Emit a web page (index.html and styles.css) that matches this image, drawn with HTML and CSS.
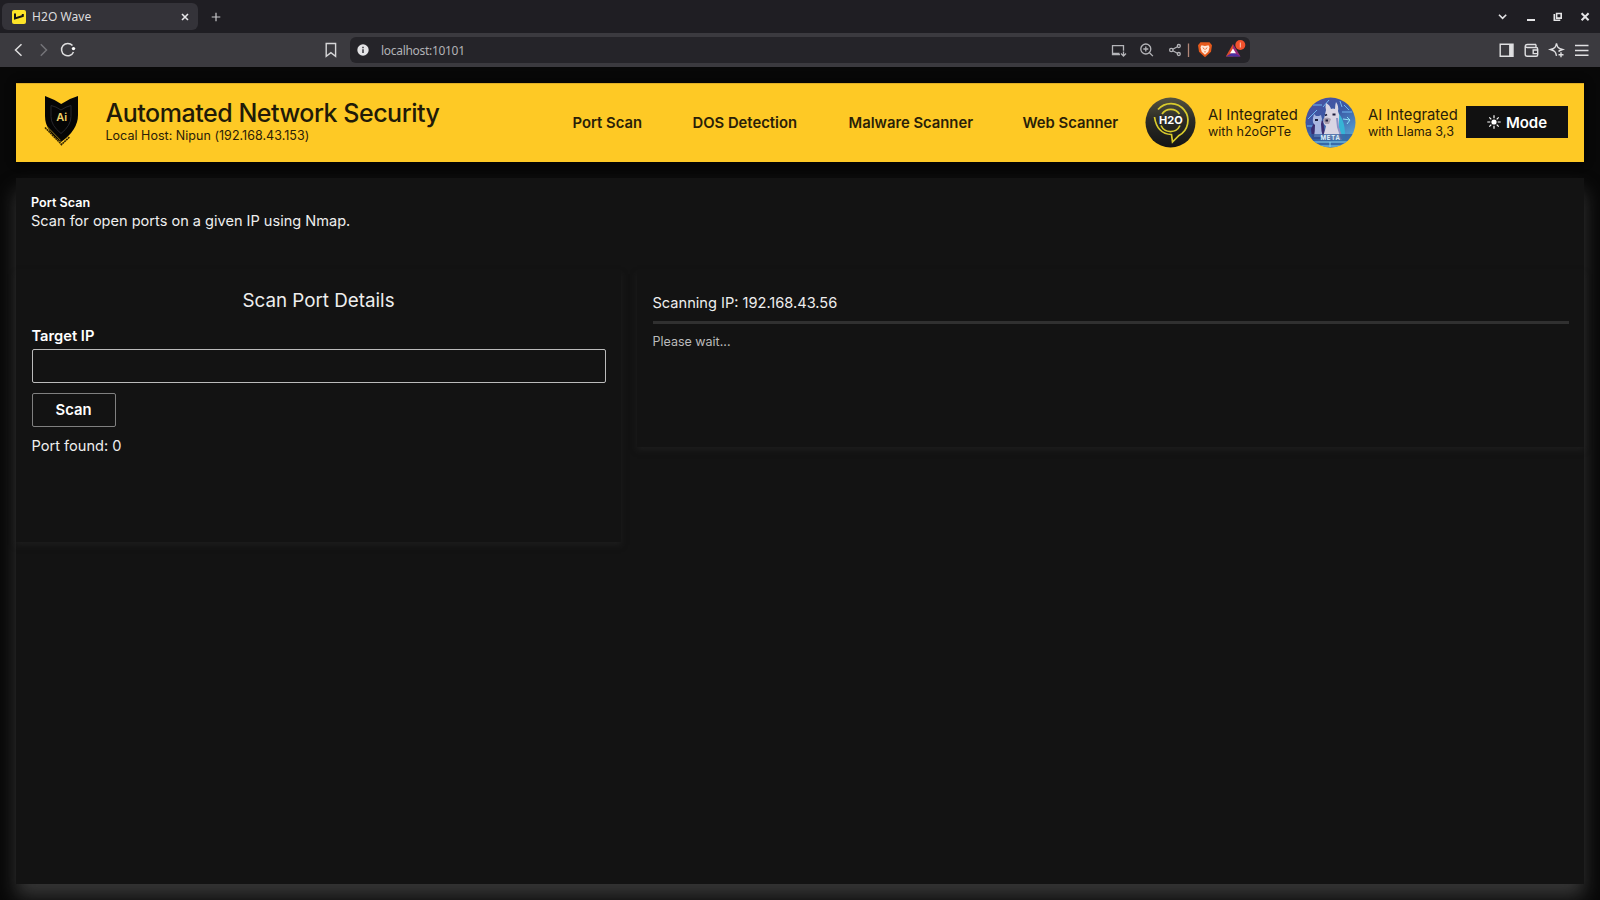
FILE: index.html
```html
<!DOCTYPE html>
<html lang="en">
<head>
<meta charset="utf-8">
<title>H2O Wave</title>
<link rel="stylesheet" href="styles.css">
</head>
<body>
<div class="tabstrip">
  <div class="tab">
    <svg class="favicon" width="14" height="14" viewBox="0 0 14 14"><rect width="14" height="14" rx="2" fill="#fde428"/><path d="M3 3.500V8.500L10.800 6V4" fill="none" stroke="#151515" stroke-width="2"/></svg>
    <span class="tab-title">H2O Wave</span>
    <svg class="tab-close" width="8" height="8" viewBox="0 0 8 8"><path d="M1 1l6 6M7 1l-6 6" stroke="#e6e6e8" stroke-width="1.6"/></svg>
  </div>
  <svg class="new-tab" width="10" height="10" viewBox="0 0 10 10"><path d="M5 .7v8.6M.7 5h8.6" stroke="#c8c8cb" stroke-width="1.2"/></svg>
  <div class="window-controls">
    <svg width="110" height="16" viewBox="1490 9 110 16" fill="none" stroke="#e4e4e6" stroke-width="1.6"><path d="M1499 14.8l3.6 3.6 3.6-3.6"/><path d="M1527 20h8" stroke-width="2"/><path d="M1556.600 13.500h4.600v4.600h-4.600zM1554.300 14v6.300h6"/><path d="M1581.600 13.200l7 7M1588.600 13.200l-7 7" stroke-width="2"/></svg>
  </div>
</div>
<div class="toolbar">
  <svg class="nav-icons" width="80" height="20" viewBox="0 40 80 20" fill="none" stroke="#dededf" stroke-width="1.5"><path d="M21.500 44.200l-6 5.800 6 5.800"/><path d="M40.800 44.200l5.700 5.800-5.700 5.800" stroke="#747478"/><path d="M73.500 52A6.200 6.200 0 1 1 72.500 45.600"/><circle cx="73.500" cy="48.600" r="1.700" fill="#fff" stroke="none"/></svg>
  <svg class="bookmark" width="12" height="16" viewBox="0 0 12 16"><path d="M1.200 1.500h9.400v12.800L5.900 10.600 1.200 14.300z" fill="none" stroke="#d6d6d8" stroke-width="1.400"/></svg>
  <div class="address">
    <svg class="info" width="12" height="12" viewBox="0 0 12 12"><circle cx="6" cy="6" r="5.700" fill="#e4e4e6"/><path d="M6 5.200V9M6 2.800v1.400" stroke="#28272d" stroke-width="1.400"/></svg>
    <span class="url">localhost:10101</span>
    <svg class="address-icons" width="140" height="24" viewBox="1109 38 140 24" fill="none" stroke="#b4b4b8" stroke-width="1.300">
      <path d="M1120 54.700h-7.500v-9h11v5M1112.500 53.500h7M1123.500 51.500v5M1121 53.500l2.500 2.500 2.500-2.500"/>
      <circle cx="1145.800" cy="49" r="5"/><path d="M1149.500 52.700l3.400 3.400M1143.300 49h5M1145.800 46.500v5"/>
      <circle cx="1171.300" cy="50" r="1.700"/><circle cx="1178.800" cy="46" r="1.500"/><circle cx="1178.800" cy="54" r="1.500"/><path d="M1172.800 49.200l4.600-2.500M1172.800 50.800l4.600 2.500"/>
      <path d="M1188.500 43.500v13.500" stroke="#b28778"/>
      <path d="M1200.500 42.300h9l2.500 3-1 6.500-6 5.400-6-5.400-1-6.500z" fill="#e65a1c" stroke="none"/><path d="M1201.500 45.200l3.500.8 3.500-.8 1 2-1.200 4.500-3.300 3-3.300-3-1.200-4.500z" fill="#ffe7d7" stroke="none"/><path d="M1203 47.500l1.400 2M1207 47.500l-1.400 2M1205 51v1.500" stroke="#e65a1c" stroke-width=".9"/>
      <path d="M1233 44l-7.200 12.400h7.200z" fill="#dd4c2c" stroke="none"/><path d="M1233 44l7.500 12.400H1233z" fill="#9a2a78" stroke="none"/><path d="M1225.800 56.400l7.200-4.200 7.500 4.200z" fill="#4b2fa0" stroke="none"/><path d="M1233 48.500l3 4.700h-6z" fill="#fff" stroke="none"/>
      <circle cx="1240.300" cy="45" r="5" fill="#f1512d" stroke="none"/><path d="M1240.300 42.500v5" stroke="#ffc8b4" stroke-width="1"/>
    </svg>
  </div>
  <svg class="right-icons" width="110" height="20" viewBox="1490 40 110 20" fill="none" stroke="#e0e0e2" stroke-width="1.400">
    <path d="M1500.200 44.200h12.800v12h-12.800z"/><path d="M1511 44v12.500" stroke-width="3.800"/>
    <path d="M1536 44.500h-8.500q-2.300 0-2.300 2v7.700q0 2 2 2h9q1.500 0 1.500-1.500v-5.500q0-1.700-1.500-1.700h-9q-1.800 0-2-1.300M1536 44.500v2.800M1538 50h-4.800v3.600h4.800"/>
    <path d="M1556.500 55.800c-.8-4-1.700-5-6-6.300 4.300-1.200 5.200-2.200 6-6.200.8 4 1.700 5 6 6.200-2 .6-3.200 1-4 2M1561 52.300v5M1558.500 54.800h5"/>
    <path d="M1575 45.500h13.500M1575 50.500h13.500M1575 55.300h13.500"/>
  </svg>
</div>
<div class="page">
  <header class="header">
    <svg class="shield" width="36" height="52" viewBox="43 95 36 52"><path d="M45 96q8.500 3 16.200 8Q69 98.500 78 96v19q0 15-17 27Q45 131 45 116z" fill="#050505"/><path d="M51 105.500q5 1 10 4.500 5-3.500 10-4.500v11q0 9-10 17-10-8-10-17z" fill="none" stroke="#26262b"/><path d="M45 127.500l15 15.300 1.500 1.700 8-7.500" fill="none" stroke="#332500" stroke-width="1.600" stroke-dasharray="2 .5"/><path d="M45.500 125l15 15.300" stroke="#fec925" stroke-width=".6"/><text x="61.800" y="121" class="shield-text">Ai</text></svg>
    <div class="brand"><div class="brand-title">Automated Network Security</div><div class="brand-sub">Local Host: Nipun (192.168.43.153)</div></div>
    <nav class="nav"><a class="n1">Port Scan</a><a class="n2">DOS Detection</a><a class="n3">Malware Scanner</a><a class="n4">Web Scanner</a></nav>
    <svg class="avatar" width="51" height="51" viewBox="0 0 51 51">
      <defs><linearGradient id="g1" x1="0" y1="0" x2="0" y2="1"><stop offset="0" stop-color="#55533e"/><stop offset=".45" stop-color="#2b2b26"/><stop offset="1" stop-color="#151514"/></linearGradient></defs>
      <circle cx="25.500" cy="25.500" r="25" fill="url(#g1)"/>
      <g fill="none" stroke="#d8cb2c" stroke-width="1.700"><path d="M13 12.500A17 17 0 1 1 34 38.500L27.500 45 26.500 37.500Q12 37 9.500 20"/><path d="M17 17A10.500 10.500 0 0 1 34.500 17M16 28.500A10.500 10.500 0 0 0 35 28.500"/></g>
      <text x="25.800" y="26.500" class="h2o-text">H2O</text>
    </svg>
    <div class="ai ai-h2o"><div class="ai-title">AI Integrated</div><div class="ai-sub">with h2oGPTe</div></div>
    <svg class="avatar" width="51" height="51" viewBox="0 0 51 51">
      <defs><linearGradient id="g2" x1="0" y1="0" x2=".6" y2="1"><stop offset="0" stop-color="#514d9e"/><stop offset=".5" stop-color="#3a5aa6"/><stop offset="1" stop-color="#58a6d4"/></linearGradient><clipPath id="c2"><circle cx="25.500" cy="25.500" r="25"/></clipPath></defs>
      <g clip-path="url(#c2)"><rect width="51" height="51" fill="url(#g2)"/>
      <path d="M3 22l9-9M8 8h9M39 8l5 5M37 15h10M2 29h6M18 10l6-7M35 4l2 6" stroke="#6fb6ef" fill="none"/>
      <path d="M32 15q9 7 8 29H28z" fill="#36b4d6"/><path d="M6 32q3-10 12-8l3 18H7z" fill="#3a2c70"/>
      <path d="M17 42q3-8 4-13-4-3-2-7l2-9q-1-3 0-7 4 2 5 6 2-1 4 0 0-4 1-7 3 4 2 9 2 4 1 9-1 10 3 20z" fill="#d9d5e3"/>
      <path d="M8 21l1-4 2 2h3l2-1 1 4-1 5q0 7 2 13H9q1-7 1-12-3-2-2-7z" fill="#a9b6e0"/>
      <path d="M18 22q4-3 8 0l-2 5h-4z" fill="#a89dac"/><path d="M27.500 17.500h3M20 18.500l2-1M10 23h3M20.500 23.500h2.500" stroke="#1c1d3c" stroke-width="1.900"/><path d="M32 21l1 9 4 12" stroke="#8d91c5" fill="none" stroke-width="2"/>
      <path d="M0 37h51v14H0z" fill="#315b9c" opacity=".75"/><path d="M38 22l7 1-3-3m3 3-3 4" fill="none" stroke="#8ee1f7"/><path d="M8 45h35M15 49h20M25 45v5" stroke="#85d7f2"/></g>
      <text x="25.500" y="43" class="meta-text">META</text>
    </svg>
    <div class="ai ai-llama"><div class="ai-title">AI Integrated</div><div class="ai-sub">with Llama 3,3</div></div>
    <div class="mode"><svg width="14" height="14" viewBox="0 0 14 14"><circle cx="7" cy="7" r="2.600" fill="#fff"/><path d="M7 .3v3M7 10.700v3M.3 7h3M10.700 7h3M2.300 2.300l2 2M9.700 9.700l2 2M2.300 11.700l2-2M9.700 4.300l2-2" stroke="#fff" stroke-width="1.200"/></svg><span>Mode</span></div>
  </header>
  <main class="content">
    <section class="intro"><h2 class="intro-title">Port Scan</h2><p class="intro-text">Scan for open ports on a given IP using Nmap.</p></section>
    <div class="cards">
      <section class="card form-card">
        <h1 class="form-title">Scan Port Details</h1>
        <label class="label">Target IP</label>
        <div class="input"></div>
        <div class="button">Scan</div>
        <p class="found">Port found: 0</p>
      </section>
      <section class="card status-card">
        <p class="status">Scanning IP: 192.168.43.56</p>
        <div class="progress"></div>
        <p class="wait">Please wait...</p>
      </section>
    </div>
  </main>
</div>
</body>
</html>
```
FILE: styles.css
```css
* { box-sizing: border-box; margin: 0; padding: 0; }
body { width: 1600px; height: 900px; overflow: hidden; background: #080808; font-family: Inter, "Noto Sans", sans-serif; color: #eee; white-space: nowrap; }
svg { display: block; flex: none; }
.tabstrip { height: 33px; background: #1f1e23; display: flex; align-items: center; font-family: "Noto Sans", sans-serif; }
.tab { width: 196px; height: 27px; margin-left: 2px; border-radius: 6px; background: #343339; display: flex; align-items: center; padding-left: 10px; }
.tab-title { width: 149px; margin-left: 6px; font-size: 12px; color: #dcdcde; letter-spacing: .06px; }
.new-tab { margin-left: 13px; }
.window-controls { margin-left: auto; }
.toolbar { height: 34px; background: #3b3a3f; display: flex; align-items: center; font-family: "Noto Sans", sans-serif; }
.bookmark { margin-left: 245px; }
.address { width: 900px; height: 26px; margin-left: 13px; border-radius: 6px; background: #252429; display: flex; align-items: center; padding-left: 7px; }
.url { width: 729px; margin-left: 12px; font-size: 12px; letter-spacing: -.3px; color: #b2b2b6; }
.address-icons { margin-left: -1px; }
.right-icons { margin-left: auto; }
.page { height: 833px; padding: 16px 16px 16px; }
.header { height: 79px; background: #fec925; display: flex; align-items: center; color: #2a2008; box-shadow: 0 0 8px #000; padding-left: 27px; border-top: 1px solid #dfae27; }
.shield { margin-bottom: 5px; }
.shield-text { font: 600 11px Inter, sans-serif; fill: #efd068; text-anchor: middle; }
.brand { width: 440px; margin-left: 26.500px; margin-bottom: 6px; flex: none; }
.brand-title { font-size: 25px; font-weight: 500; line-height: 30px; letter-spacing: -.47px; color: #211a08; }
.brand-sub { font-size: 12.500px; line-height: 15px; letter-spacing: .03px; }
.nav { display: flex; flex: none; width: 572.500px; margin-left: 27px; font-size: 14.800px; font-weight: 600; color: #2a1f08; }
.n1 { width: 120px; }
.n2 { width: 156px; }
.n3 { width: 174px; }
.n4 { width: 122.500px; }
.avatar { margin-bottom: 2px; }
.ai-title { font-size: 14.800px; line-height: 18px; }
.ai-sub { font-size: 12.600px; line-height: 15px; }
.ai { margin-left: 12px; margin-bottom: 2px; flex: none; }
.ai-h2o { width: 97px; }
.ai-llama { width: 98px; }
.mode { width: 102px; height: 32px; margin-bottom: 2px; flex: none; background: #111; color: #fff; display: flex; align-items: center; justify-content: center; gap: 5px; font-size: 15px; font-weight: 600; }
.h2o-text { font: 700 11px Inter, sans-serif; fill: #fff; text-anchor: middle; }
.meta-text { font: 600 6px Inter, sans-serif; fill: #e7faff; text-anchor: middle; letter-spacing: .8px; }
.content { height: 706px; margin-top: 16px; background: #131313; box-shadow: 0 13px 18px rgba(72, 72, 72, .72); }
.intro { padding: 16px 15px 0; height: 93px; }
.intro-title { font-size: 12.600px; line-height: 17px; font-weight: 600; color: #fff; }
.intro-text { font-size: 14.550px; line-height: 20px; }
.cards { display: flex; gap: 16px; align-items: flex-start; }
.card { padding: 0 15.500px; box-shadow: 0 3px 6px rgba(38, 38, 38, .55); }
.form-card { width: 605px; height: 271px; }
.form-title { margin-top: 17px; font-size: 18.800px; line-height: 26px; font-weight: 400; text-align: center; }
.label { display: block; margin-top: 12px; font-size: 14.700px; line-height: 20px; font-weight: 600; color: #fff; }
.input { height: 34px; margin-top: 3px; border: 1px solid #bbb; border-radius: 2px; }
.button { width: 84px; height: 34px; margin-top: 10px; border: 1px solid #808080; border-radius: 2px; display: flex; align-items: center; justify-content: center; padding-bottom: 1px; font-size: 14.800px; font-weight: 600; color: #fff; }
.found { margin-top: 9px; font-size: 14.600px; line-height: 20px; }
.status-card { width: 947px; height: 176px; }
.status { margin-top: 22px; font-size: 14.600px; line-height: 20px; }
.progress { height: 3px; margin-top: 8px; background: #303030; }
.wait { margin-top: 9px; font-size: 12.500px; line-height: 18px; color: #bbb; }
```
